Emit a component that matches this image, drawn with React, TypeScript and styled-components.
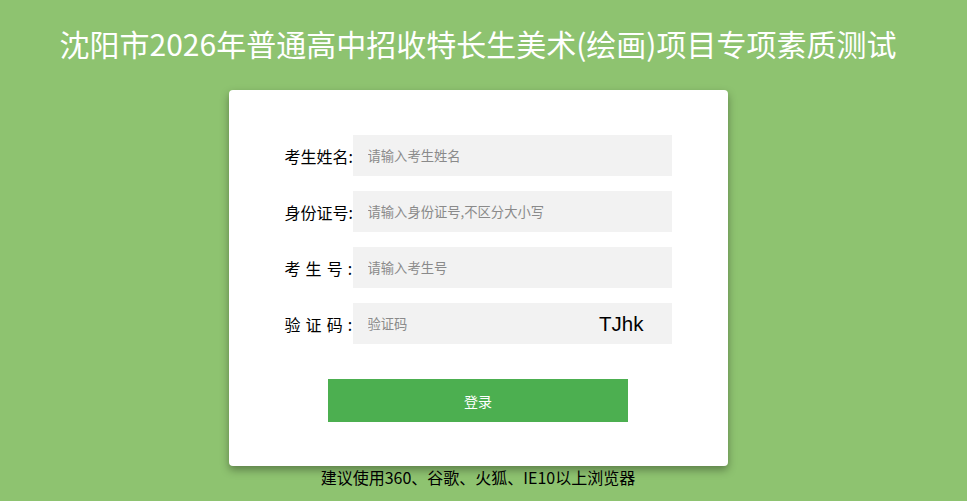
import React from "react";
import styled, { createGlobalStyle } from "styled-components";

const Global = createGlobalStyle`
  html, body { margin: 0; padding: 0; }
  body {
    background: #8ec370;
    font-family: "Microsoft YaHei", "Noto Sans CJK SC", "Noto Sans", sans-serif;
    overflow: hidden;
  }
`;

const Page = styled.div`
  width: 956px;
  display: flex;
  flex-direction: column;
  align-items: center;
`;

const Title = styled.h1`
  margin: 22px 0 0;
  height: 68px;
  font-size: 30px;
  line-height: 42px;
  font-weight: normal;
  color: #fff;
  white-space: nowrap;
`;

const Card = styled.div`
  width: 499px;
  box-sizing: border-box;
  background: #fff;
  border-radius: 4px;
  box-shadow: 0 4px 8px rgba(0, 0, 0, 0.35);
  padding: 45px 56px 44px;
  display: flex;
  flex-direction: column;
  align-items: center;
`;

const Rows = styled.div`
  display: flex;
  flex-direction: column;
  gap: 15px;
  width: 100%;
`;

const Row = styled.div`
  display: flex;
  align-items: center;
`;

const Label = styled.label`
  width: 67px;
  flex: none;
  text-align: right;
  font-size: 16px;
  color: #000;
  white-space: pre;
  word-spacing: 1.5px;
  margin-right: 1px;
`;

const Field = styled.div`
  flex: 1;
  height: 41px;
  background: #f2f2f2;
  display: flex;
  align-items: center;
  padding: 0 28px 0 15px;
`;

const Input = styled.input`
  flex: 1;
  min-width: 0;
  border: none;
  outline: none;
  background: transparent;
  padding: 0;
  font-family: inherit;
  font-size: 13.3px;
  color: #333;
  &::placeholder { color: #8a8a8a; }
`;

const Captcha = styled.span`
  font-family: "Liberation Sans", Arial, sans-serif;
  font-size: 20.5px;
  color: #000;
`;

const Button = styled.button`
  margin-top: 35px;
  width: 300px;
  height: 43px;
  border: none;
  background: #4caf50;
  color: #fff;
  font-family: inherit;
  font-size: 14px;
  cursor: pointer;
`;

const Footer = styled.div`
  font-size: 16px;
  line-height: 23px;
  color: #000;
`;

const fields = [
  { label: "考生姓名:", placeholder: "请输入考生姓名" },
  { label: "身份证号:", placeholder: "请输入身份证号,不区分大小写" },
  { label: "考 生 号 :", placeholder: "请输入考生号" },
  { label: "验 证 码 :", placeholder: "验证码", captcha: "TJhk" },
];

export default function App() {
  return (
    <>
      <Global />
      <Page>
        <Title>沈阳市2026年普通高中招收特长生美术(绘画)项目专项素质测试</Title>
        <Card>
          <Rows>
            {fields.map((f) => (
              <Row key={f.label}>
                <Label>{f.label}</Label>
                <Field>
                  <Input placeholder={f.placeholder} />
                  {f.captcha && <Captcha>{f.captcha}</Captcha>}
                </Field>
              </Row>
            ))}
          </Rows>
          <Button>登录</Button>
        </Card>
        <Footer>建议使用360、谷歌、火狐、IE10以上浏览器</Footer>
      </Page>
    </>
  );
}
